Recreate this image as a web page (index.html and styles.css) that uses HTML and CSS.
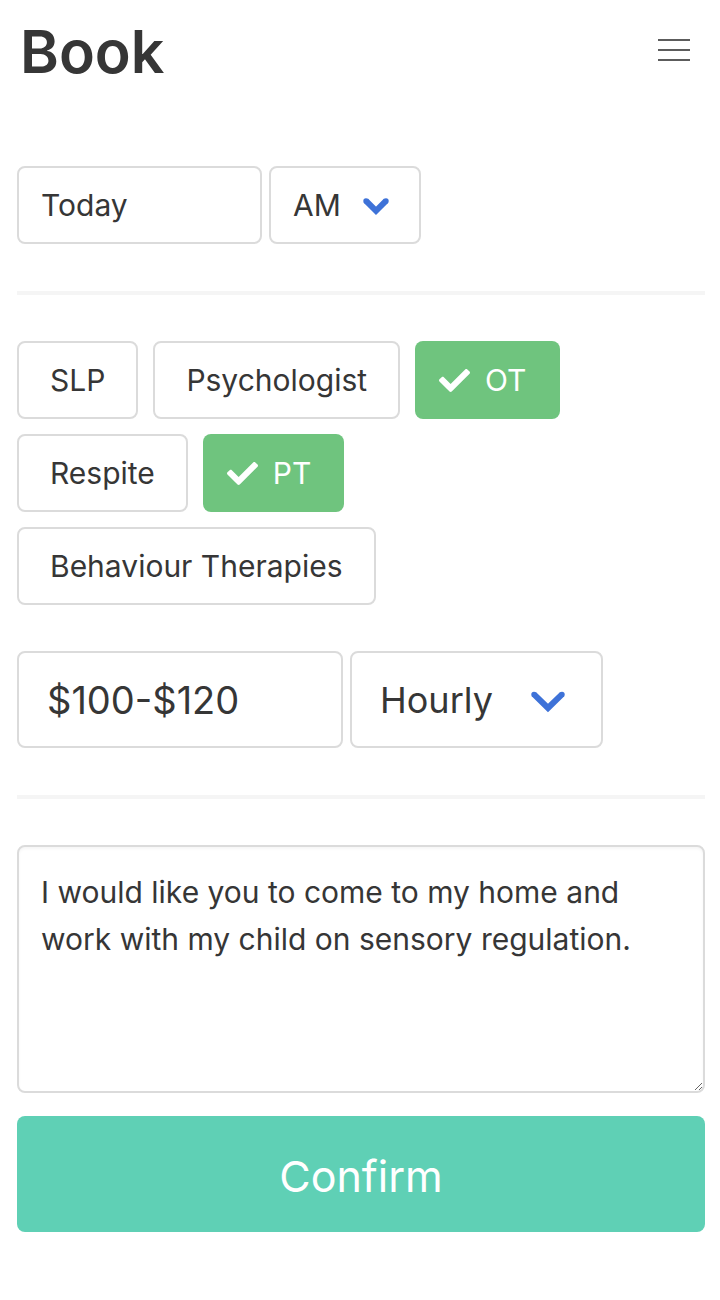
FILE: index.html
```html
<!DOCTYPE html>
<html lang="en">
<head>
<meta charset="utf-8">
<meta name="viewport" content="width=device-width, initial-scale=1">
<title>Book</title>
<link rel="stylesheet" href="styles.css">
</head>
<body>
<header class="topbar">
  <h1 class="title">Book</h1>
  <button class="menu" type="button" aria-label="Menu">
    <span class="menu-line"></span>
    <span class="menu-line"></span>
    <span class="menu-line"></span>
  </button>
</header>
<main>
  <form class="booking">
    <div class="row">
      <input class="field day" type="text" value="Today" aria-label="Day">
      <div class="picker">
        <select class="field period" aria-label="Time of day"><option>AM</option><option>PM</option></select>
        <svg class="chevron" width="26" height="22" viewBox="0 -4 26 22" aria-hidden="true"><path d="M2.800 2.600 13 12.800 23.200 2.600"/><circle cx="3" cy="3" r="2.700"/><circle cx="23" cy="3" r="2.700"/></svg>
      </div>
    </div>
    <hr class="divider">
    <div class="chips" role="group" aria-label="Services">
      <button class="chip" type="button" aria-pressed="false">SLP</button>
      <button class="chip" type="button" aria-pressed="false">Psychologist</button>
      <button class="chip chip-on" type="button" aria-pressed="true"><svg class="check" viewBox="0 0 512 512" aria-hidden="true"><path d="M173.898 439.404l-166.400-166.400c-9.997-9.997-9.997-26.206 0-36.204l36.203-36.204c9.997-9.998 26.207-9.998 36.204 0L192 312.690 432.095 72.596c9.997-9.997 26.207-9.997 36.204 0l36.203 36.204c9.997 9.997 9.997 26.206 0 36.204l-294.400 294.401c-9.998 9.997-26.207 9.997-36.204-.001z"/></svg>OT</button>
      <button class="chip" type="button" aria-pressed="false">Respite</button>
      <button class="chip chip-on" type="button" aria-pressed="true"><svg class="check" viewBox="0 0 512 512" aria-hidden="true"><path d="M173.898 439.404l-166.400-166.400c-9.997-9.997-9.997-26.206 0-36.204l36.203-36.204c9.997-9.998 26.207-9.998 36.204 0L192 312.690 432.095 72.596c9.997-9.997 26.207-9.997 36.204 0l36.203 36.204c9.997 9.997 9.997 26.206 0 36.204l-294.400 294.401c-9.998 9.997-26.207 9.997-36.204-.001z"/></svg>PT</button>
      <button class="chip" type="button" aria-pressed="false">Behaviour Therapies</button>
    </div>
    <div class="row">
      <input class="field field-large price" type="text" value="$100-$120" aria-label="Price range">
      <div class="picker">
        <select class="field field-large rate" aria-label="Rate"><option>Hourly</option><option>Daily</option></select>
        <svg class="chevron chevron-large" width="34" height="26" viewBox="0 -4 34 26" aria-hidden="true"><path d="M2.800 3.200 17 17 31.200 3.200"/><circle cx="3" cy="3.400" r="2.700"/><circle cx="31" cy="3.400" r="2.700"/></svg>
      </div>
    </div>
    <hr class="divider">
    <textarea class="field message" aria-label="Message">I would like you to come to my home and work with my child on sensory regulation.</textarea>
    <button class="confirm" type="button">Confirm</button>
  </form>
</main>
</body>
</html>
```

FILE: styles.css
```css
* {
  box-sizing: border-box;
}

body {
  margin: 0;
  padding: 16px 15px 32px 17px;
  background: #fff;
  color: #363636;
  font-family: Inter, "Liberation Sans", sans-serif;
  font-size: 30px;
}

input,
select,
textarea,
button {
  margin: 0;
  color: inherit;
  font: inherit;
}

.topbar {
  display: flex;
  align-items: center;
  justify-content: space-between;
  padding: 0 15px 0 3px;
  margin-bottom: 78px;
}

.title {
  margin: 0;
  font-size: 59px;
  font-weight: 600;
  line-height: 72px;
}

.menu {
  display: flex;
  flex-direction: column;
  gap: 8px;
  padding: 0 0 4px;
  border: 0;
  background: none;
}

.menu-line {
  width: 32px;
  height: 2px;
  background: #5c5c5c;
}

.row {
  display: flex;
  gap: 7px;
}

.field {
  height: 78px;
  padding: 0 22px;
  border: 2px solid #dbdbdb;
  border-radius: 8px;
  background: #fff;
  appearance: none;
}

.field-large {
  height: 97px;
  padding: 0 28px;
  font-size: 38px;
}

.day {
  width: 245px;
}

.period {
  width: 152px;
}

.price {
  width: 326px;
}

.rate {
  width: 253px;
  font-size: 36px;
}

.picker {
  display: grid;
  align-items: center;
}

.picker > * {
  grid-area: 1 / 1;
}

.chevron {
  justify-self: end;
  margin-right: 32px;
  fill: #3e72d8;
  pointer-events: none;
}

.chevron path {
  fill: none;
  stroke: #3e72d8;
  stroke-width: 6;
}

.chevron-large {
  margin-right: 38px;
}

.divider {
  height: 4px;
  margin: 47px 0 46px;
  border: 0;
  background: #f5f5f5;
}

.chips {
  display: flex;
  flex-wrap: wrap;
  gap: 15px;
  margin-bottom: 46px;
}

.chip {
  display: flex;
  align-items: center;
  height: 78px;
  padding: 0 31px;
  border: 2px solid #dbdbdb;
  border-radius: 8px;
  background: #fff;
}

.chip-on {
  gap: 15px;
  padding: 0 33px 0 24px;
  border: 0;
  background: #6fc47e;
  color: #fff;
}

.check {
  width: 31px;
  height: 31px;
  fill: #fff;
}

.message {
  display: block;
  width: 100%;
  height: 248px;
  padding: 22px;
  line-height: 47px;
  box-shadow: inset 0 2px 3px rgba(10, 10, 10, 0.04);
  resize: vertical;
}

.confirm {
  display: block;
  width: 100%;
  height: 116px;
  margin-top: 23px;
  padding: 4px 0 0;
  border: 0;
  border-radius: 8px;
  background: #5fd0b5;
  color: #fff;
  font-size: 43px;
}
```
